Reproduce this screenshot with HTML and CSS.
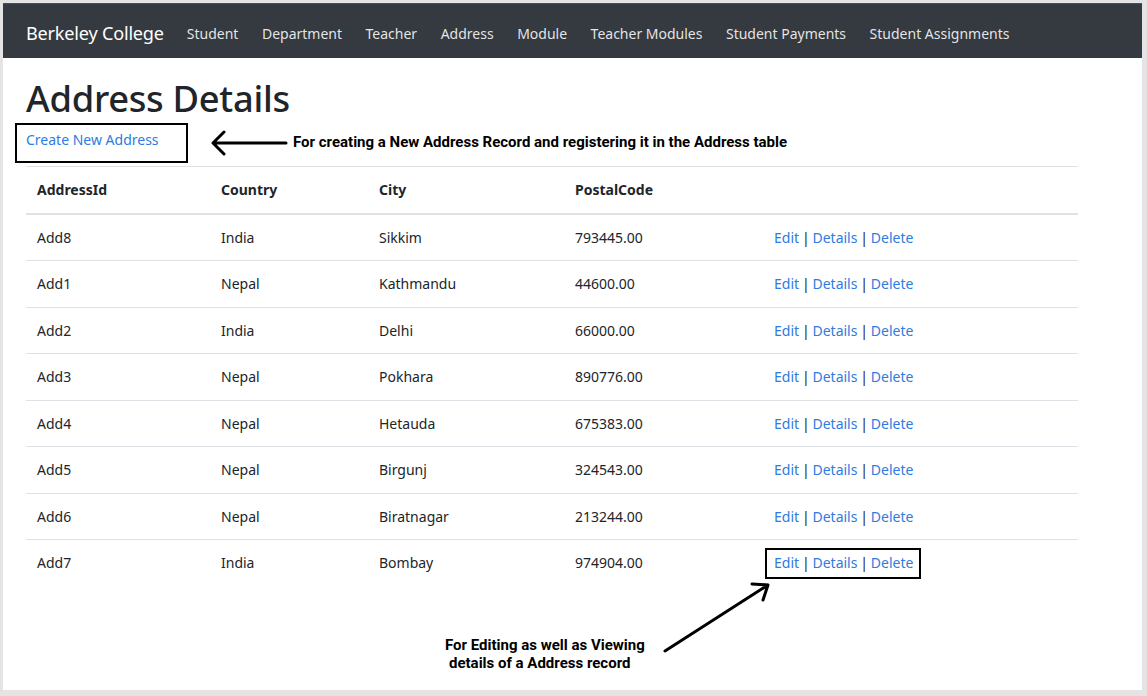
FILE: index.html
```html
<!DOCTYPE html>
<html lang="en">
<head>
<meta charset="utf-8">
<title>Address Details - Berkeley College</title>
<link rel="stylesheet" href="styles.css">
</head>
<body>
<div class="frame">
  <nav class="navbar">
    <a class="brand" href="#">Berkeley College</a>
    <ul class="nav">
      <li><a href="#">Student</a></li>
      <li><a href="#">Department</a></li>
      <li><a href="#">Teacher</a></li>
      <li><a href="#">Address</a></li>
      <li><a href="#">Module</a></li>
      <li><a href="#">Teacher Modules</a></li>
      <li><a href="#">Student Payments</a></li>
      <li><a href="#">Student Assignments</a></li>
    </ul>
  </nav>
  <main class="container">
    <h1 class="title">Address Details</h1>
    <p class="create"><a href="#">Create New Address</a></p>
    <table class="table">
      <thead>
        <tr><th class="c1">AddressId</th><th class="c2">Country</th><th class="c3">City</th><th class="c4">PostalCode</th><th></th></tr>
      </thead>
      <tbody>
        <tr><td>Add8</td><td>India</td><td>Sikkim</td><td>793445.00</td><td class="actions"><a href="#">Edit</a> | <a href="#">Details</a> | <a href="#">Delete</a></td></tr>
        <tr><td>Add1</td><td>Nepal</td><td>Kathmandu</td><td>44600.00</td><td class="actions"><a href="#">Edit</a> | <a href="#">Details</a> | <a href="#">Delete</a></td></tr>
        <tr><td>Add2</td><td>India</td><td>Delhi</td><td>66000.00</td><td class="actions"><a href="#">Edit</a> | <a href="#">Details</a> | <a href="#">Delete</a></td></tr>
        <tr><td>Add3</td><td>Nepal</td><td>Pokhara</td><td>890776.00</td><td class="actions"><a href="#">Edit</a> | <a href="#">Details</a> | <a href="#">Delete</a></td></tr>
        <tr><td>Add4</td><td>Nepal</td><td>Hetauda</td><td>675383.00</td><td class="actions"><a href="#">Edit</a> | <a href="#">Details</a> | <a href="#">Delete</a></td></tr>
        <tr><td>Add5</td><td>Nepal</td><td>Birgunj</td><td>324543.00</td><td class="actions"><a href="#">Edit</a> | <a href="#">Details</a> | <a href="#">Delete</a></td></tr>
        <tr><td>Add6</td><td>Nepal</td><td>Biratnagar</td><td>213244.00</td><td class="actions"><a href="#">Edit</a> | <a href="#">Details</a> | <a href="#">Delete</a></td></tr>
        <tr><td>Add7</td><td>India</td><td>Bombay</td><td>974904.00</td><td class="actions"><a href="#">Edit</a> | <a href="#">Details</a> | <a href="#">Delete</a></td></tr>
      </tbody>
    </table>
  </main>

  <div class="box box-create"></div>
  <svg class="arrow arrow-left" width="80" height="30" viewBox="0 0 80 30">
    <path d="M76 15 H4 M14 4 L3 15 L14 26" fill="none" stroke="#000" stroke-width="3" stroke-linecap="round" stroke-linejoin="round"/>
  </svg>
  <div class="note note-create">For creating a New Address Record and registering it in the Address table</div>

  <div class="box box-actions"></div>
  <svg class="arrow arrow-diag" width="112" height="76" viewBox="0 0 112 76">
    <path d="M3 72 L106 6 M90 5 L106 6 L101 21" fill="none" stroke="#000" stroke-width="3" stroke-linecap="round" stroke-linejoin="round"/>
  </svg>
  <div class="note note-actions">For Editing as well as Viewing<br><span class="indent">details of a Address record</span></div>
</div>
</body>
</html>
```

FILE: styles.css
```css
html, body {
  margin: 0;
  padding: 0;
}

body {
  background: #e4e4e4;
  font-family: "Noto Sans", "Open Sans", "Liberation Sans", sans-serif;
  color: #212529;
}

.frame {
  position: relative;
  margin: 3px 5px 0 3px;
  height: 687px;
  background: #fff;
  overflow: hidden;
}

.navbar {
  display: flex;
  align-items: center;
  height: 55px;
  padding: 3px 0 0 23px;
  background: #343a40;
  border-top: 1px solid #4a5056;
  box-sizing: border-box;
}

.brand {
  color: #fff;
  text-decoration: none;
  font-size: 18.1px;
  margin-right: 23px;
  letter-spacing: -0.2px;
}

.nav {
  display: flex;
  list-style: none;
  margin: 0;
  padding: 0;
  gap: 23.5px;
}

.nav a {
  color: rgba(255, 255, 255, 0.88);
  text-decoration: none;
  font-size: 14px;
}

.container {
  padding: 0 65px 0 23px;
}

.title {
  margin: 18px 0 0 0;
  font-size: 36.3px;
  font-weight: 500;
  line-height: 44px;
  letter-spacing: -0.3px;
}

.create {
  margin: 8px 0 0 0;
  font-size: 14px;
  line-height: 24px;
}

a {
  color: #2f7be0;
  text-decoration: none;
}

.table {
  width: 1052px;
  margin-top: 14px;
  border-collapse: collapse;
  font-size: 14px;
}

.table th,
.table td {
  text-align: left;
  padding: 12px 11px;
  line-height: 21.5px;
  border-top: 1px solid #dee2e6;
  vertical-align: top;
}

.table th {
  font-weight: 700;
  border-bottom: 2px solid #dee2e6;
}

.c1 { width: 162px; }
.c2 { width: 136px; }
.c3 { width: 174px; }
.c4 { width: 177px; }

.actions {
  color: #212529;
  word-spacing: -0.8px;
}

.box {
  position: absolute;
  border: 2px solid #000;
  box-sizing: border-box;
}

.box-create {
  left: 12px;
  top: 120px;
  width: 173px;
  height: 40px;
}

.box-actions {
  left: 762px;
  top: 545px;
  width: 156px;
  height: 31px;
}

.arrow {
  position: absolute;
}

.arrow-left {
  left: 207px;
  top: 125px;
}

.arrow-diag {
  left: 659px;
  top: 576px;
}

.note {
  position: absolute;
  font-family: Roboto, "Liberation Sans", sans-serif;
  font-weight: 700;
  font-size: 15px;
  color: #000;
  line-height: 18px;
}

.note-create {
  left: 290px;
  top: 130px;
}

.note-actions {
  left: 442px;
  top: 633px;
  width: 205px;
}

.indent {
  padding-left: 4px;
}
```
